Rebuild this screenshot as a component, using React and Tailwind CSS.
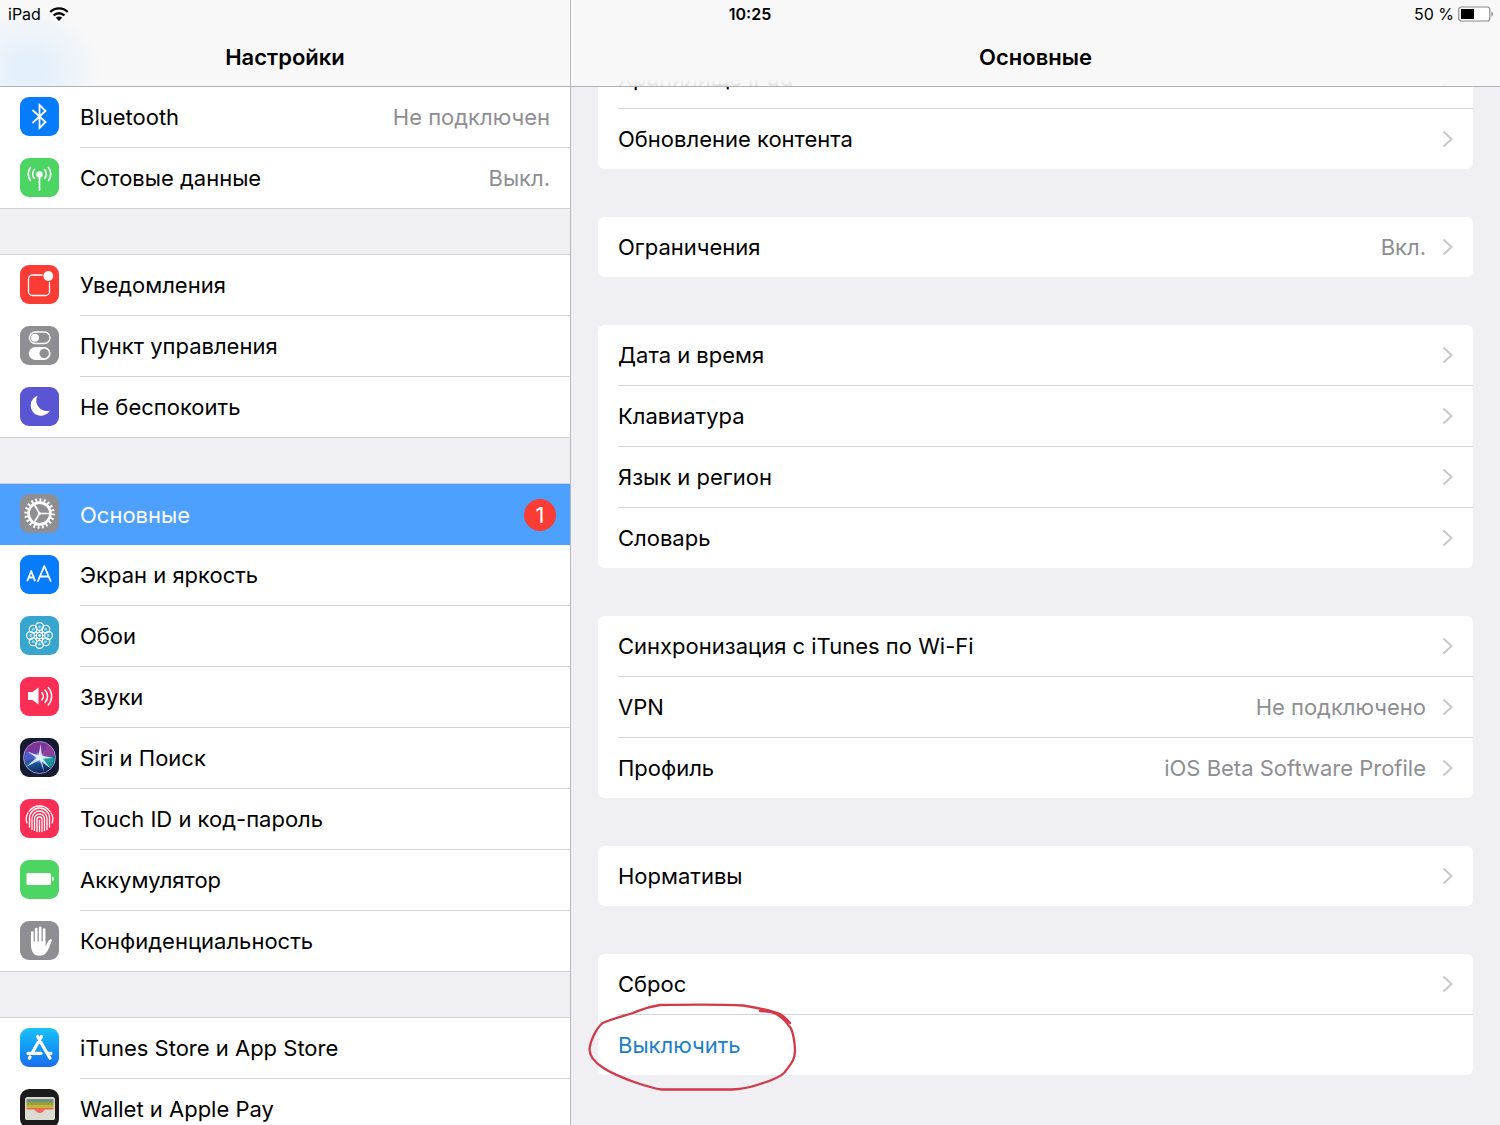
import React from "react";

const WHITE_LINE = { fill: "none", stroke: "#fff", strokeLinecap: "round", strokeLinejoin: "round" };

function Tile({ className, children }) {
  return (
    <svg viewBox="0 0 39 39" aria-hidden="true" className={`mt-2.5 size-[39px] shrink-0 rounded-[9px] ${className}`}>
      {children}
    </svg>
  );
}

const BluetoothIcon = () => (
  <Tile className="bg-[#067cfb]">
    <path d="M13 13.5 25.5 25 19.5 31V8l6 6L13 25.5" {...WHITE_LINE} strokeWidth="1.8" strokeLinejoin="miter" />
  </Tile>
);

const CellularIcon = () => (
  <Tile className="bg-[#4cd562]">
    <g {...WHITE_LINE} strokeWidth="1.7">
      <path d="M19.5 17v15" />
      <path d="M14.5 11.5a6.5 6.5 0 0 0 0 9M24.5 11.5a6.5 6.5 0 0 1 0 9" />
      <path d="M10.5 9.5a10.5 10.5 0 0 0 0 13M28.5 9.5a10.5 10.5 0 0 1 0 13" />
    </g>
    <circle cx="19.5" cy="16.5" r="3.2" fill="#fff" />
  </Tile>
);

const NotificationsIcon = () => (
  <Tile className="bg-[#fb3c35]">
    <path d="M22 10H12.5a4 4 0 0 0-4 4V26.5a4 4 0 0 0 4 4H25.5a4 4 0 0 0 4-4V17.500" {...WHITE_LINE} strokeWidth="1.3" />
    <circle cx="28.3" cy="11" r="4.9" fill="#fff" />
  </Tile>
);

const ControlCenterIcon = () => (
  <Tile className="bg-[#8e8e93]">
    <rect x="9.5" y="6" width="20.5" height="11.5" rx="5.7" fill="none" stroke="#fff" strokeWidth="1.4" />
    <circle cx="15" cy="11.7" r="3.9" fill="#fff" />
    <rect x="8.8" y="21" width="21.8" height="13" rx="6.5" fill="#fff" />
    <circle cx="24.2" cy="27.5" r="4.7" fill="#8e8e93" />
  </Tile>
);

const MoonIcon = () => (
  <Tile className="bg-[#5a55d2]">
    <path d="M17.500 8.800A10.300 10.300 0 1 0 30 23.500 10.500 10.500 0 0 1 17.500 8.800z" fill="#fff" />
  </Tile>
);

const GearIcon = () => (
  <Tile className="bg-[#8e8e93]">
    <g fill="none" stroke="#fff">
      <circle cx="19.5" cy="19.5" r="13.5" strokeWidth="3.4" pathLength="40" strokeDasharray="0.9 1.1" />
      <circle cx="19.5" cy="19.5" r="10.9" strokeWidth="2.6" />
      <path d="M19.5 19.5H30M19.5 19.5 14 10M19.5 19.5 14 29" strokeWidth="1.7" />
    </g>
    <circle cx="19.5" cy="19.5" r="1.6" fill="#fff" />
  </Tile>
);

const DisplayIcon = () => (
  <Tile className="bg-[#067cfb]">
    <g {...WHITE_LINE} strokeWidth="1.8">
      <path d="m7.5 25.500 3.700-9.500L14.900 25.500M8.800 22.500h4.800" />
      <path d="m18 26 6.300-15 6.300 15M20.200 21.500h8.200" />
    </g>
  </Tile>
);

const WallpaperIcon = () => (
  <Tile className="bg-[#37a6cf]">
    <g {...WHITE_LINE} strokeWidth="1.2">
      {[0, 45, 90, 135, 180, 225, 270, 315].map((a) => (
        <g key={a} transform={`rotate(${a} 19.5 19.5)`}>
          <circle cx="19.5" cy="10.5" r="3.9" />
          <circle cx="19.5" cy="10.8" r="1.4" fill="#fff" stroke="none" opacity="0.55" />
          <path d="M19.5 16.5v-2" />
        </g>
      ))}
      <circle cx="19.5" cy="19.5" r="3.2" />
      <circle cx="19.5" cy="19.5" r="0.8" fill="#fff" />
    </g>
  </Tile>
);

const SoundIcon = () => (
  <Tile className="bg-[#fb2f55]">
    <path d="M8 15h4.5l6-4.500v17l-6-4.500H8z" fill="#fff" />
    <g {...WHITE_LINE} strokeWidth="1.6">
      <path d="M21.800 15.500a5.500 5.500 0 0 1 0 7.500M25 13a9 9 0 0 1 0 12.500M28.200 10.500a13 13 0 0 1 0 17.500" />
    </g>
  </Tile>
);

const SiriIcon = () => (
  <Tile className="bg-[#171a33]">
    <defs>
      <radialGradient id="siri-core">
        <stop offset="0" stopColor="#fff" />
        <stop offset="0.3" stopColor="#d9f4ff" stopOpacity="0.8" />
        <stop offset="1" stopColor="#8fd8ff" stopOpacity="0" />
      </radialGradient>
      <linearGradient id="siri-orb" x1="0.3" y1="0" x2="0.6" y2="1">
        <stop offset="0" stopColor="#8a2c8c" />
        <stop offset="0.4" stopColor="#6a3fa8" />
        <stop offset="0.6" stopColor="#1c5f9c" />
        <stop offset="1" stopColor="#101c58" />
      </linearGradient>
    </defs>
    <circle cx="19.5" cy="19.5" r="16" fill="url(#siri-orb)" stroke="#a9a4c8" strokeWidth="0.9" />
    <path d="M19.5 19.5 5 23a15 15 0 0 1 1-10z" fill="#3a70e0" opacity="0.6" />
    <path d="M19.5 19.5 28 7a15 15 0 0 1 6.500 11z" fill="#b04098" opacity="0.6" />
    <path d="M19.5 19.5 34.500 20a15 15 0 0 1-4 10z" fill="#20b8a0" opacity="0.7" />
    <circle cx="19.5" cy="19.5" r="6" fill="url(#siri-core)" />
    <g fill="#eef9ff" opacity="0.85">
      <path d="M18 19.500 20.800 6l1 13z" />
      <path d="M20 17.500 34 19.800 20.500 21z" />
      <path d="M21.500 19 30.500 30.500 19 21.500z" />
      <path d="M21.500 20.500 24 34l-4.500-13z" />
      <path d="M20.500 21.500 6 29l12-10.500z" />
      <path d="M18.500 21 7 13.500 20.500 18z" />
    </g>
  </Tile>
);

const TouchIdIcon = () => (
  <Tile className="bg-[#fb2f55]">
    <g {...WHITE_LINE} strokeWidth="1.3">
      <path d="M9 12.500a12.800 12.800 0 0 1 21 0" />
      <path d="M7 24c-2-5 0-8.500 1-10M32 24c2-5 0-8.500-1-10" />
      <path d="M9.500 28V19a10 10 0 0 1 20 0V28" />
      <path d="M12 30.500V19.500a7.500 7.500 0 0 1 15 0V30.500" />
      <path d="M14.500 31.500V20a5 5 0 0 1 10 0V31.500" />
      <path d="M17 32.500V20.500a2.500 2.500 0 0 1 5 0V32.500" />
      <path d="M19.500 21.500V32.500" />
    </g>
  </Tile>
);

const BatteryIcon = () => (
  <Tile className="bg-[#4cd562]">
    <rect x="6.5" y="13" width="24.500" height="12" rx="1.5" fill="#fff" />
    <path d="M32 16.500a2.600 2.600 0 0 1 0 5z" fill="#fff" />
  </Tile>
);

const HandIcon = () => (
  <Tile className="bg-[#8e8e93]">
    <g {...WHITE_LINE} strokeWidth="2.7">
      <path d="M12.300 11.500v12M16.200 8v14M20.200 6.800v15M24.100 8.500v14" />
    </g>
    <path d="M11 20.500h14.500v4.500c1.500-1 2.300-5.500 4.500-6.500 1-.5 2.200.2 1.800 1.200-1.800 4-3 9.500-6.300 12.800-3 3-9.500 3-12 0-2-2.300-2.500-6-2.500-9z" fill="#fff" />
  </Tile>
);

const AppStoreIcon = () => (
  <Tile className="bg-linear-to-b from-[#1dc1f8] to-[#1c6df0]">
    <g {...WHITE_LINE} strokeWidth="3.2">
      <path d="M21.500 8.500 12.300 24.800M10 29 9.300 30.200M17.500 8.500 30 30.200M8 25.300h13M27.800 25.300H31" />
    </g>
  </Tile>
);

const WalletIcon = () => (
  <Tile className="bg-[#1c1a1b]">
    <rect x="5" y="8" width="30" height="23" rx="2.5" fill="#d9d8cb" />
    <path d="M6.500 10h27v4h-27z" fill="#6f8f86" />
    <path d="M6.500 13h27v4h-27z" fill="#93a33c" />
    <path d="M6.500 16h27v4h-27z" fill="#c9b43a" />
    <path d="M6.500 19h27v3h-27z" fill="#ec6c52" />
    <path d="M5 20.500h9c2 0 2 3.500 5.800 3.500s3.800-3.500 5.800-3.500H35v8a2.500 2.500 0 0 1-2.500 2.500h-25A2.500 2.500 0 0 1 5 28.500z" fill="#dcdbd2" />
    <path d="M14 20.500c2 0 2 3.500 5.800 3.500s3.800-3.500 5.800-3.500z" fill="#ec6c52" />
  </Tile>
);

const SIDEBAR = [
  [
    { label: "Bluetooth", Icon: BluetoothIcon, value: "Не подключен" },
    { label: "Сотовые данные", Icon: CellularIcon, value: "Выкл." },
  ],
  [
    { label: "Уведомления", Icon: NotificationsIcon },
    { label: "Пункт управления", Icon: ControlCenterIcon },
    { label: "Не беспокоить", Icon: MoonIcon },
  ],
  [
    { label: "Основные", Icon: GearIcon, badge: 1, selected: true },
    { label: "Экран и яркость", Icon: DisplayIcon },
    { label: "Обои", Icon: WallpaperIcon },
    { label: "Звуки", Icon: SoundIcon },
    { label: "Siri и Поиск", Icon: SiriIcon },
    { label: "Touch ID и код-пароль", Icon: TouchIdIcon },
    { label: "Аккумулятор", Icon: BatteryIcon },
    { label: "Конфиденциальность", Icon: HandIcon },
  ],
  [
    { label: "iTunes Store и App Store", Icon: AppStoreIcon },
    { label: "Wallet и Apple Pay", Icon: WalletIcon },
  ],
];

const CARDS = [
  [{ label: "Хранилище iPad" }, { label: "Обновление контента" }],
  [{ label: "Ограничения", value: "Вкл." }],
  [{ label: "Дата и время" }, { label: "Клавиатура" }, { label: "Язык и регион" }, { label: "Словарь" }],
  [
    { label: "Синхронизация с iTunes по Wi-Fi" },
    { label: "VPN", value: "Не подключено" },
    { label: "Профиль", value: "iOS Beta Software Profile" },
  ],
  [{ label: "Нормативы" }],
  [{ label: "Сброс" }, { label: "Выключить", action: true }],
];

function SidebarRow({ label, Icon, value, badge, selected, divided }) {
  const line = selected ? "h-[61px]" : divided ? "h-[61px] border-b border-[#d3d3d7]" : "h-[60px]";
  return (
    <li className={selected ? "bg-[#4da0fd] text-white" : ""}>
      <button type="button" aria-current={selected ? "page" : undefined} className="flex w-full items-start gap-[21px] pl-5 text-left">
        <Icon />
        <span className={`flex grow items-center justify-between ${line}`}>
          <span>{label}</span>
          {value && <span className="pr-5 text-[#8e8e93]">{value}</span>}
          {badge && (
            <span className="mr-3.5 flex size-8 items-center justify-center rounded-full bg-[#fb3c35] text-white">{badge}</span>
          )}
        </span>
      </button>
    </li>
  );
}

function Chevron() {
  return (
    <svg viewBox="0 0 11 18" aria-hidden="true" className="h-[18px] w-[11px] shrink-0">
      <path d="m1.500 1.500 8 7.500-8 7.500" fill="none" stroke="#c7c7cc" strokeWidth="2" />
    </svg>
  );
}

function Scribble() {
  return (
    <svg viewBox="0 0 214 92" aria-hidden="true" className="pointer-events-none absolute -top-3.5 -left-3 h-[92px] w-[214px]">
      <g fill="none" stroke="#d23a49" strokeWidth="2.3" strokeLinecap="round" strokeLinejoin="round">
        <path d="M204 22Q199 16 194 13Q185 9 157 4.500C140 3.500 100 3.500 74 4C60 6 55 9 47 12C38 15 22 19 16 22.500C10 28 4 40 3.500 49C4 56 10 62 16 66C26 73 42 79 54 83C62 85 68 88 76 88.500H146C156 88 166 86 174 83C184 80 194 76 198 72C206 62 209 58 209 50C209 42 207 30 204 26C198 18 191 12 185 11L174 10" />
      </g>
    </svg>
  );
}

function CardRow({ label, value, action, divided }) {
  return (
    <li className="pl-5">
      <button type="button" className={`flex w-full items-center text-left ${divided ? "h-[61px] border-b border-[#d3d3d7]" : "h-[60px]"}`}>
        <span className={`grow ${action ? "text-[#1a80cc]" : ""}`}>{label}</span>
        {value && <span className="pr-4 text-[#8e8e93]">{value}</span>}
        {!action && <span className="pr-5"><Chevron /></span>}
      </button>
    </li>
  );
}

function StatusBar() {
  return (
    <div className="absolute inset-x-0 top-0 z-20 grid h-7 grid-cols-3 items-center px-2 text-base">
      <div className="flex items-center gap-2">
        <span>iPad</span>
        <svg viewBox="0 0 20 14" role="img" aria-label="Wi-Fi" className="h-3.5 w-5">
          <path d="M10 14 6.900 10.700a4.400 4.400 0 0 1 6.200 0z" />
          <g fill="none" stroke="#000" strokeWidth="2.3">
            <path d="M4.600 8.500a7.600 7.600 0 0 1 10.800 0" />
            <path d="M1.300 5a12.300 12.300 0 0 1 17.400 0" />
          </g>
        </svg>
      </div>
      <time className="text-center font-semibold">10:25</time>
      <div className="flex items-center justify-end gap-1">
        <span>50 %</span>
        <svg viewBox="0 0 36 16" aria-hidden="true" className="-mr-0.5 h-4 w-9">
          <rect x="0.8" y="1" width="31" height="14" rx="2.5" fill="#fff" stroke="#8a8a8a" strokeWidth="1.2" />
          <rect x="3" y="3" width="13" height="10" fill="#000" />
          <path d="M33.500 5.500a3 3 0 0 1 0 5z" fill="#777" />
        </svg>
      </div>
    </div>
  );
}

export default function App() {
  return (
    <div className="relative flex h-screen overflow-hidden bg-[#efeff4] font-['Inter','Noto_Sans',sans-serif] text-[22px] leading-7 text-black">
      <StatusBar />

      <aside className="flex w-[38%] shrink-0 flex-col">
        <header className="shrink-0 border-b border-[#b2b2b6] bg-[#f8f8f8] bg-[radial-gradient(ellipse_72px_64px_at_30px_70px,#e4f0fb_20%,#f8f8f8_100%)] pt-[43px] pb-[15px]">
          <h1 className="text-center font-semibold">Настройки</h1>
        </header>
        <nav aria-label="Настройки" className="flex min-h-0 grow flex-col overflow-hidden">
          {SIDEBAR.map((group, g) => (
            <React.Fragment key={g}>
              {g > 0 && <div className="h-[47px] shrink-0 border-y border-[#d3d3d7] bg-[#efeff4]" />}
              <ul className="shrink-0 bg-white">
                {group.map((row, i) => (
                  <SidebarRow key={row.label} {...row} divided={i < group.length - 1} />
                ))}
              </ul>
            </React.Fragment>
          ))}
        </nav>
      </aside>

      <main className="flex min-w-0 grow flex-col border-l border-[#b8b8bd]">
        <header className="z-10 shrink-0 border-b border-[#b2b2b6] bg-linear-to-b from-[#f8f8f8] from-92% to-[#f8f8f8e6] pt-[43px] pb-[15px]">
          <h2 className="text-center font-semibold">Основные</h2>
        </header>
        <div className="-mt-[39px] flex min-h-0 grow flex-col gap-12 px-[27px]">
          {CARDS.map((card, c) => (
            <ul key={c} className="relative shrink-0 rounded-md bg-white">
              {card.map((row, i) => (
                <CardRow key={row.label} {...row} divided={i < card.length - 1} />
              ))}
              {card.some((row) => row.action) && (
                <li aria-hidden="true" className="absolute top-[61px] left-0">
                  <Scribble />
                </li>
              )}
            </ul>
          ))}
        </div>
      </main>
    </div>
  );
}
